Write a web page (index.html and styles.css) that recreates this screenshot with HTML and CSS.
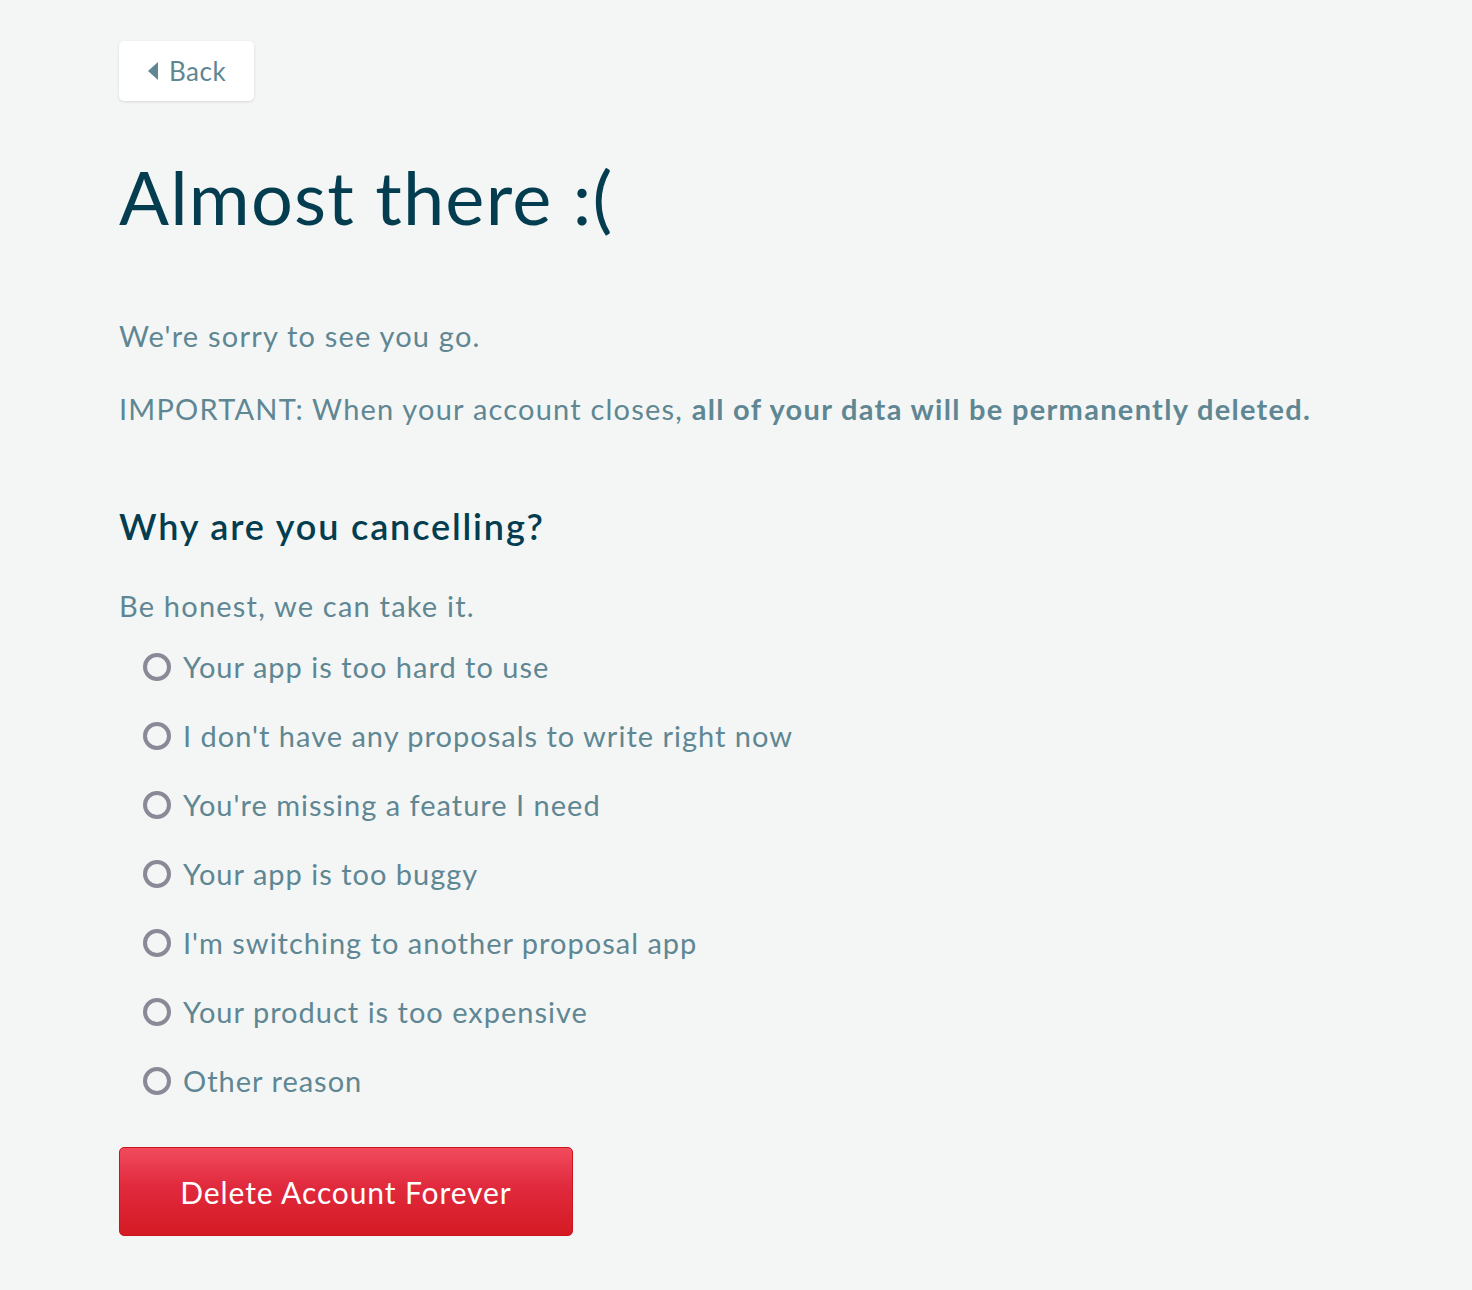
FILE: index.html
```html
<!DOCTYPE html>
<html lang="en">
<head>
<meta charset="utf-8">
<title>Almost there</title>
<link rel="stylesheet" href="styles.css">
</head>
<body>
<main class="page">
  <a class="back-btn" href="#"><span class="caret"></span>Back</a>
  <h1 class="title">Almost there :(</h1>
  <p class="text sorry">We're sorry to see you go.</p>
  <p class="text important">IMPORTANT: When your account closes, <strong>all of your data will be permanently deleted.</strong></p>
  <h2 class="subtitle">Why are you cancelling?</h2>
  <p class="text honest">Be honest, we can take it.</p>
  <ul class="reasons">
    <li class="reason"><span class="radio"></span><span class="label">Your app is too hard to use</span></li>
    <li class="reason"><span class="radio"></span><span class="label">I don't have any proposals to write right now</span></li>
    <li class="reason"><span class="radio"></span><span class="label">You're missing a feature I need</span></li>
    <li class="reason"><span class="radio"></span><span class="label">Your app is too buggy</span></li>
    <li class="reason"><span class="radio"></span><span class="label">I'm switching to another proposal app</span></li>
    <li class="reason"><span class="radio"></span><span class="label">Your product is too expensive</span></li>
    <li class="reason"><span class="radio"></span><span class="label">Other reason</span></li>
  </ul>
  <button class="delete-btn" type="button">Delete Account Forever</button>
</main>
</body>
</html>
```
FILE: styles.css
```css
* { box-sizing: border-box; }
html, body { margin: 0; padding: 0; }
body {
  background: #f4f6f5;
  font-family: "Lato", "Liberation Sans", sans-serif;
  color: #5f8793;
}
.page {
  padding: 41px 0 0 119px;
  display: flex;
  flex-direction: column;
  align-items: flex-start;
}
.back-btn {
  display: flex;
  align-items: center;
  width: 135px;
  height: 60px;
  padding-left: 29px;
  background: #fff;
  border-radius: 5px;
  box-shadow: 0 1px 3px rgba(0,0,0,0.12);
  color: #5f8793;
  font-size: 26px;
  letter-spacing: 0.5px;
  text-decoration: none;
}
.caret {
  width: 0; height: 0;
  border-top: 9px solid transparent;
  border-bottom: 9px solid transparent;
  border-right: 10px solid #5f8793;
  margin-right: 11px;
}
.title {
  margin: 52px 0 0;
  font-size: 74px;
  font-weight: 400;
  color: #033d4f;
  line-height: 88px;
  letter-spacing: 1.2px;
}
.text {
  margin: 0;
  font-size: 29px;
  line-height: 36px;
  letter-spacing: 1.2px;
}
.sorry { margin-top: 77px; }
.important { margin-top: 37px; }
.important strong { font-weight: 700; letter-spacing: 1.3px; }
.subtitle {
  margin: 77px 0 0;
  font-size: 36px;
  font-weight: 600;
  color: #033d4f;
  line-height: 44px;
  letter-spacing: 1.85px;
}
.honest { margin-top: 40px; }
.reasons {
  list-style: none;
  margin: 8px 0 0;
  padding: 0 0 0 24px;
  display: flex;
  flex-direction: column;
}
.reason {
  display: flex;
  align-items: center;
  height: 69px;
}
.radio {
  width: 28px;
  height: 28px;
  border: 4px solid #8b8998;
  border-radius: 50%;
  margin-right: 12px;
  flex: none;
}
.label {
  font-size: 29px;
  color: #5f8793;
  letter-spacing: 1px;
}
.delete-btn {
  margin-top: 32px;
  width: 454px;
  height: 89px;
  border: 1.5px solid #c9141d;
  border-radius: 5px;
  background: linear-gradient(to bottom, #f24b5e 0%, #e0293c 45%, #d41b24 100%);
  color: #fff;
  font-family: "Lato", "Liberation Sans", sans-serif;
  font-size: 30px;
  letter-spacing: 0.9px;
  padding: 0;
}
```
